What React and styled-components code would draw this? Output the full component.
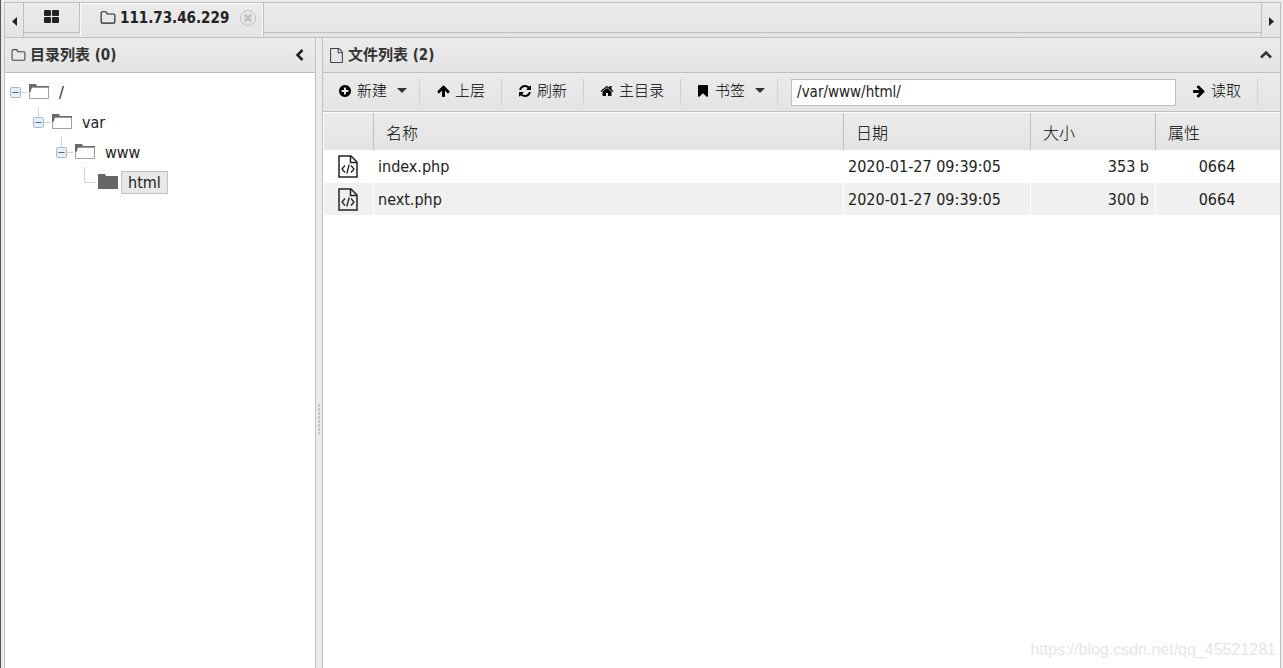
import React from 'react';
import styled, { createGlobalStyle, css } from 'styled-components';

const BORDER = '#c0c0c0';
const TEXT = '#222';
const font = '"DejaVu Sans Condensed", "Noto Sans CJK SC", sans-serif';

const GlobalStyle = createGlobalStyle`
	* {
		box-sizing: border-box;
	}

	body {
		margin: 0;
		background: #ebebeb;
		color: ${TEXT};
		font-family: ${font};
		font-size: 16px;
	}

	button {
		margin: 0;
		padding: 0;
		border: 0;
		background: none;
		color: inherit;
		font: inherit;
		cursor: pointer;
	}
`;

const bar = css`
	background: linear-gradient(#ebebeb, #e4e4e4);
`;

const Page = styled.div`
	position: relative;
	display: flex;
	flex-direction: column;
	height: 100vh;
	padding: 2px 2px 0 3px;
	border-left: 1px solid #555;
	overflow: hidden;
`;

const TabBar = styled.nav`
	${bar}
	display: flex;
	flex: none;
	height: 36px;
	border: 1px solid ${BORDER};
`;

const ScrollButton = styled.button`
	display: flex;
	align-items: center;
	justify-content: center;
	width: 18px;
	padding-top: 3px;
`;

const Tabs = styled.div`
	display: flex;
	flex: 1;
	border: solid ${BORDER};
	border-width: 0 1px;
`;

const Tab = styled.div`
	display: flex;
	align-items: center;
	height: ${(props) => (props.$active ? '34px' : '30px')};
	padding: ${(props) => (props.$active ? '0 6px 4px 20px' : '0 20px 2px')};
	border: solid ${BORDER};
	border-width: ${(props) => (props.$active ? '0 1px 0 0' : '0 1px 1px 0')};
	box-shadow: ${(props) => (props.$active ? 'inset 1px 1px #fafafa, inset -1px 0 #fafafa' : 'none')};
`;

const TabButton = styled.button`
	display: flex;
	align-items: center;
	gap: 4px;
	font: bold 15px/20px ${font};
`;

const CloseButton = styled.button`
	display: flex;
	margin-left: 10px;
`;

const TabSpace = styled.div`
	flex: 1;
	height: 30px;
	border-bottom: 1px solid ${BORDER};
`;

const Workspace = styled.main`
	display: flex;
	flex: 1;
	min-height: 0;
`;

const Panel = styled.section`
	display: flex;
	flex-direction: column;
	flex: ${(props) => (props.$width ? `0 0 ${props.$width}` : '1')};
	min-width: 0;
	border: solid ${BORDER};
	border-width: 0 1px;
	background: #fff;
`;

const PanelHeader = styled.header`
	${bar}
	display: flex;
	flex: none;
	align-items: center;
	gap: 4px;
	height: 35px;
	padding: 0 7px 0 6px;
	border-bottom: 1px solid ${BORDER};
	color: #444;
`;

const PanelTitle = styled.h2`
	flex: 1;
	margin: 0;
	color: #333;
	font: bold 15px/20px ${font};
`;

const CollapseButton = styled.button`
	display: flex;
`;

const Splitter = styled.div`
	display: flex;
	flex: none;
	justify-content: center;
	width: 6px;
	cursor: col-resize;
`;

const Grip = styled.span`
	width: 2px;
	height: 30px;
	margin-top: 366px;
	background: repeating-linear-gradient(#c8c8c8 0 3px, transparent 3px 4px);
`;

const TreeList = styled.ul`
	margin: 0;
	padding: ${(props) => (props.$nested ? '0 0 0 23px' : '4px 0 0 5px')};
	list-style: none;
`;

const TreeRow = styled.div`
	display: flex;
	align-items: center;
	height: 30px;
`;

const Toggle = styled.button`
	display: flex;
`;

const Branch = styled.svg`
	flex: none;
	fill: none;
	stroke: #d4d4d4;
`;

const TreeLabel = styled.a`
	margin-left: 3px;
	padding: 1px 6px 0;
	border: 1px solid ${(props) => (props.$selected ? BORDER : 'transparent')};
	background: ${(props) => (props.$selected ? '#e8e8e8' : 'none')};
	color: ${TEXT};
	line-height: 20px;
	text-decoration: none;
`;

const Toolbar = styled.div`
	${bar}
	display: flex;
	flex: none;
	align-items: center;
	height: 39px;
	padding-right: 22px;
	border-bottom: 1px solid ${BORDER};
`;

const ToolButton = styled.button`
	display: flex;
	flex: none;
	align-items: center;
	gap: 5px;
	height: 26px;
	padding: 0 ${(props) => (props.$menu ? '12px 3px 15px' : '16px 3px 16px')};
	border-right: 1px solid #c9d3da;
	color: #000;
	font-size: 15px;
	font-weight: 300;
	line-height: 20px;
	white-space: nowrap;
`;

const MenuCaret = styled.svg`
	margin-left: 5px;
`;

const PathInput = styled.input`
	flex: 1;
	min-width: 0;
	height: 27px;
	margin-left: 13px;
	padding: 0 5px;
	border: 1px solid ${BORDER};
	background: #fff;
	color: ${TEXT};
	font: 15px ${font};
`;

const FileTable = styled.table`
	width: 100%;
	padding: 1px 0 0 1px;
	border-spacing: 0;
	table-layout: fixed;
`;

const HeadCell = styled.th`
	height: 37px;
	padding: 0 12px;
	border-right: 1px solid ${BORDER};
	background: linear-gradient(#ebebeb, #e3e3e3);
	color: #000;
	font-weight: 300;
	text-align: left;

	&:last-child {
		border-right: 0;
	}
`;

const Row = styled.tr`
	background: #fff;

	&:nth-child(even) {
		background: #f0f0f0;
	}
`;

const Cell = styled.td`
	height: 33px;
	padding: 1px 6px 0 4px;
	border: solid #fff;
	border-width: 0 1px 1px 0;
	line-height: 22px;
	text-align: ${(props) => props.$align || 'left'};

	&:last-child {
		border-right: 0;
	}

	svg {
		display: block;
		margin: 0 auto;
	}
`;

const Watermark = styled.span`
	position: absolute;
	right: 7px;
	bottom: 8px;
	color: #e6e6e6;
	font: 16px/20px "Liberation Sans", sans-serif;
	pointer-events: none;
`;

const glyphs = {
	add:
		'M1344 960v-128q0-26-19-45t-45-19h-256v-256q0-26-19-45t-45-19h-128q-26 0-45 19t-19 45v256h-256q-26 0-45 19t-19 45v128q0 26 19 45t45 19h256v256q0 26 19 45t45 19h128q26 0 45-19t19-45v-256h256q26 0 45-19t19-45zm320-64q0 209-103 385.5t-279.5 279.5-385.5 103-385.5-103-279.5-279.5-103-385.5 103-385.5 279.5-279.5 385.5-103 385.5 103 279.5 279.5 103 385.5z',
	arrow:
		'M1600 960q0 54-37 91l-651 651q-39 37-91 37-51 0-90-37l-75-75q-38-38-38-91t38-91l293-293h-704q-52 0-84.5-37.5t-32.5-90.5v-128q0-53 32.5-90.5t84.5-37.5h704l-293-294q-38-36-38-90t38-90l75-75q38-38 90-38 53 0 91 38l651 651q37 35 37 90z',
	refresh:
		'M1639 1056q0 5-1 7-64 268-268 434.5t-478 166.5q-146 0-282.5-55t-243.5-157l-129 129q-19 19-45 19t-45-19-19-45v-448q0-26 19-45t45-19h448q26 0 45 19t19 45-19 45l-137 137q71 66 161 102t187 36q134 0 250-65t186-179q11-17 53-117 8-23 30-23h192q13 0 22.5 9.5t9.5 22.5zm25-800v448q0 26-19 45t-45 19h-448q-26 0-45-19t-19-45 19-45l138-138q-148-137-349-137-134 0-250 65t-186 179q-11 17-53 117-8 23-30 23h-199q-13 0-22.5-9.5t-9.5-22.5v-7q65-268 270-434.5t480-166.5q146 0 284 55.5t245 156.5l130-129q19-19 45-19t45 19 19 45z',
	home:
		'M1472 992v480q0 26-19 45t-45 19h-384v-384h-256v384h-384q-26 0-45-19t-19-45v-480q0-1 .5-3t.5-3l575-474 575 474q1 2 1 6zm223-69l-62 74q-8 9-21 11h-3q-13 0-21-7l-692-577-692 577q-12 8-24 7-13-2-21-11l-62-74q-8-10-7-23.5t11-21.5l719-599q32-26 76-26t76 26l244 204v-195q0-14 9-23t23-9h192q14 0 23 9t9 23v408l219 182q10 8 11 21.5t-7 23.5z',
	bookmark:
		'M1420 128q23 0 44 9 33 13 52.5 41t19.5 62v1289q0 34-19.5 62t-52.5 41q-19 8-44 8-48 0-83-32l-441-424-441 424q-36 33-83 33-23 0-44-9-33-13-52.5-41t-19.5-62v-1289q0-34 19.5-62t52.5-41q21-9 44-9h1048z',
	folder:
		'M1600 1312v-704q0-40-28-68t-68-28h-704q-40 0-68-28t-28-68v-64q0-40-28-68t-68-28h-320q-40 0-68 28t-28 68v960q0 40 28 68t68 28h1216q40 0 68-28t28-68zm128-704v704q0 92-66 158t-158 66h-1216q-92 0-158-66t-66-158v-960q0-92 66-158t158-66h320q92 0 158 66t66 158v32h672q92 0 158 66t66 158z',
	file:
		'M1596 380q28 28 48 76t20 88v1152q0 40-28 68t-68 28h-1344q-40 0-68-28t-28-68v-1600q0-40 28-68t68-28h896q40 0 88 20t76 48zm-444-244v376h376q-10-29-22-41l-313-313q-12-12-41-22zm384 1528v-1024h-416q-40 0-68-28t-28-68v-416h-768v1536h1280z'
};

const Glyph = ({ name, size = 15, rotate = 0 }) => (
	<svg width={size} height={size} viewBox="0 0 1792 1792" fill="currentColor" aria-hidden="true">
		<path d={glyphs[name]} transform={`rotate(${rotate} 896 896)`} />
	</svg>
);

const GridIcon = () => (
	<svg width="15" height="13" viewBox="0 0 15 13" fill="#222" aria-hidden="true">
		<rect width="7" height="6" rx="1" />
		<rect x="8" width="7" height="6" rx="1" />
		<rect y="7" width="7" height="6" rx="1" />
		<rect x="8" y="7" width="7" height="6" rx="1" />
	</svg>
);

const CloseIcon = () => (
	<svg width="18" height="18" viewBox="0 0 18 18" fill="none" stroke="#c2c2c2" aria-hidden="true">
		<circle cx="9" cy="9" r="7.5" />
		<path d="M5.8 5.8l6.4 6.4M12.2 5.8l-6.4 6.4" strokeWidth="3" />
	</svg>
);

const TreeFolder = ({ filled }) => (
	<svg width="20" height="18" viewBox="0 0 20 18" aria-hidden="true">
		{filled ? (
			<path d="M0 1h7l1 2h12v13H0z" fill="#666" />
		) : (
			<React.Fragment>
				<path d="M.5 4h19v11.500H.5z" fill="#fff" stroke="#a0a0a0" />
				<path d="M0 1h7l1 2h12v1.500H3L1.500 9H0z" fill="#6a6a6a" />
			</React.Fragment>
		)}
	</svg>
);

const PhpIcon = () => (
	<svg width="20" height="23" viewBox="0 0 20 23" fill="none" stroke="#222" strokeWidth="1.5" aria-hidden="true">
		<path d="M1 1h12l6 6v15H1z" />
		<path d="M12.500 1v6.500H19" />
		<path d="M7 10.500l-3 3.500 3 3.500M13 10.500l3 3.500-3 3.500M11.200 9.500l-2.400 9" strokeWidth="1.300" />
	</svg>
);

const tools = [
	{ label: '新建', icon: 'add', menu: true },
	{ label: '上层', icon: 'arrow', rotate: -90 },
	{ label: '刷新', icon: 'refresh' },
	{ label: '主目录', icon: 'home' },
	{ label: '书签', icon: 'bookmark', menu: true }
];

const tree = {
	name: '/',
	child: { name: 'var', child: { name: 'www', child: { name: 'html' } } }
};

const files = [
	{ name: 'index.php', date: '2020-01-27 09:39:05', size: '353 b', mode: '0664' },
	{ name: 'next.php', date: '2020-01-27 09:39:05', size: '300 b', mode: '0664' }
];

const Tool = ({ label, icon, rotate, menu }) => (
	<ToolButton type="button" $menu={menu}>
		<Glyph name={icon} rotate={rotate} size={14} />
		{label}
		{menu && (
			<MenuCaret width="10" height="5" viewBox="0 0 10 5" fill="#333" aria-hidden="true">
				<path d="M0 0h10L5 5z" />
			</MenuCaret>
		)}
	</ToolButton>
);

const TreeNode = ({ node, nested }) => (
	<TreeList $nested={nested}>
		<li>
			<TreeRow>
				{node.child ? (
					<Toggle type="button" aria-label={`Collapse ${node.name}`}>
						<Branch width="19" height="30" viewBox="0 0 19 30" aria-hidden="true">
							<path d={nested ? 'M5.500 0v10M11 15.500h6' : 'M11 15.500h6'} />
							<rect x=".5" y="10.500" width="10" height="10" rx="1" fill="#e6eef4" stroke="#a9bac6" />
							<path d="M2.500 15.500h6" stroke="#456b80" />
						</Branch>
					</Toggle>
				) : (
					<Branch width="19" height="30" viewBox="0 0 19 30" aria-hidden="true">
						<path d="M5.500 0v15.500H17" />
					</Branch>
				)}
				<TreeFolder filled={!node.child} />
				<TreeLabel href="#" $selected={!node.child}>
					{node.name}
				</TreeLabel>
			</TreeRow>
			{node.child && <TreeNode node={node.child} nested />}
		</li>
	</TreeList>
);

const App = () => (
	<Page>
		<GlobalStyle />
		<TabBar>
			<ScrollButton type="button" aria-label="Scroll tabs left">
				<svg width="5" height="9" viewBox="0 0 5 9" fill="#222">
					<path d="M5 0v9L0 4.500z" />
				</svg>
			</ScrollButton>
			<Tabs>
				<Tab>
					<TabButton type="button" aria-label="Home">
						<GridIcon />
					</TabButton>
				</Tab>
				<Tab $active>
					<TabButton type="button">
						<Glyph name="folder" size={16} />
						111.73.46.229
					</TabButton>
					<CloseButton type="button" aria-label="Close tab">
						<CloseIcon />
					</CloseButton>
				</Tab>
				<TabSpace />
			</Tabs>
			<ScrollButton type="button" aria-label="Scroll tabs right">
				<svg width="5" height="9" viewBox="0 0 5 9" fill="#222">
					<path d="M0 0v9l5-4.500z" />
				</svg>
			</ScrollButton>
		</TabBar>
		<Workspace>
			<Panel $width="312px">
				<PanelHeader>
					<Glyph name="folder" />
					<PanelTitle>目录列表 (0)</PanelTitle>
					<CollapseButton type="button" aria-label="Collapse folder list">
						<svg width="16" height="12" viewBox="0 0 16 12" fill="none" stroke="#222" strokeWidth="2.500">
							<path d="M10.500 1L5.500 6l5 5" />
						</svg>
					</CollapseButton>
				</PanelHeader>
				<TreeNode node={tree} />
			</Panel>
			<Splitter>
				<Grip />
			</Splitter>
			<Panel>
				<PanelHeader>
					<Glyph name="file" />
					<PanelTitle>文件列表 (2)</PanelTitle>
					<CollapseButton type="button" aria-label="Collapse file list">
						<svg width="14" height="12" viewBox="0 0 14 12" fill="none" stroke="#333" strokeWidth="2.500">
							<path d="M2 8.500l5-5 5 5" />
						</svg>
					</CollapseButton>
				</PanelHeader>
				<Toolbar>
					{tools.map((tool) => <Tool key={tool.label} {...tool} />)}
					<PathInput aria-label="Path" defaultValue="/var/www/html/" />
					<Tool label="读取" icon="arrow" />
				</Toolbar>
				<FileTable>
					<colgroup>
						<col width="50" />
						<col />
						<col width="187" />
						<col width="125" />
						<col width="124" />
					</colgroup>
					<thead>
						<tr>
							<HeadCell aria-label="Type" />
							<HeadCell>名称</HeadCell>
							<HeadCell>日期</HeadCell>
							<HeadCell>大小</HeadCell>
							<HeadCell>属性</HeadCell>
						</tr>
					</thead>
					<tbody>
						{files.map((file) => (
							<Row key={file.name}>
								<Cell>
									<PhpIcon />
								</Cell>
								<Cell>{file.name}</Cell>
								<Cell>{file.date}</Cell>
								<Cell $align="right">{file.size}</Cell>
								<Cell $align="center">{file.mode}</Cell>
							</Row>
						))}
					</tbody>
				</FileTable>
			</Panel>
		</Workspace>
		<Watermark>https://blog.csdn.net/qq_45521281</Watermark>
	</Page>
);

export default App;
